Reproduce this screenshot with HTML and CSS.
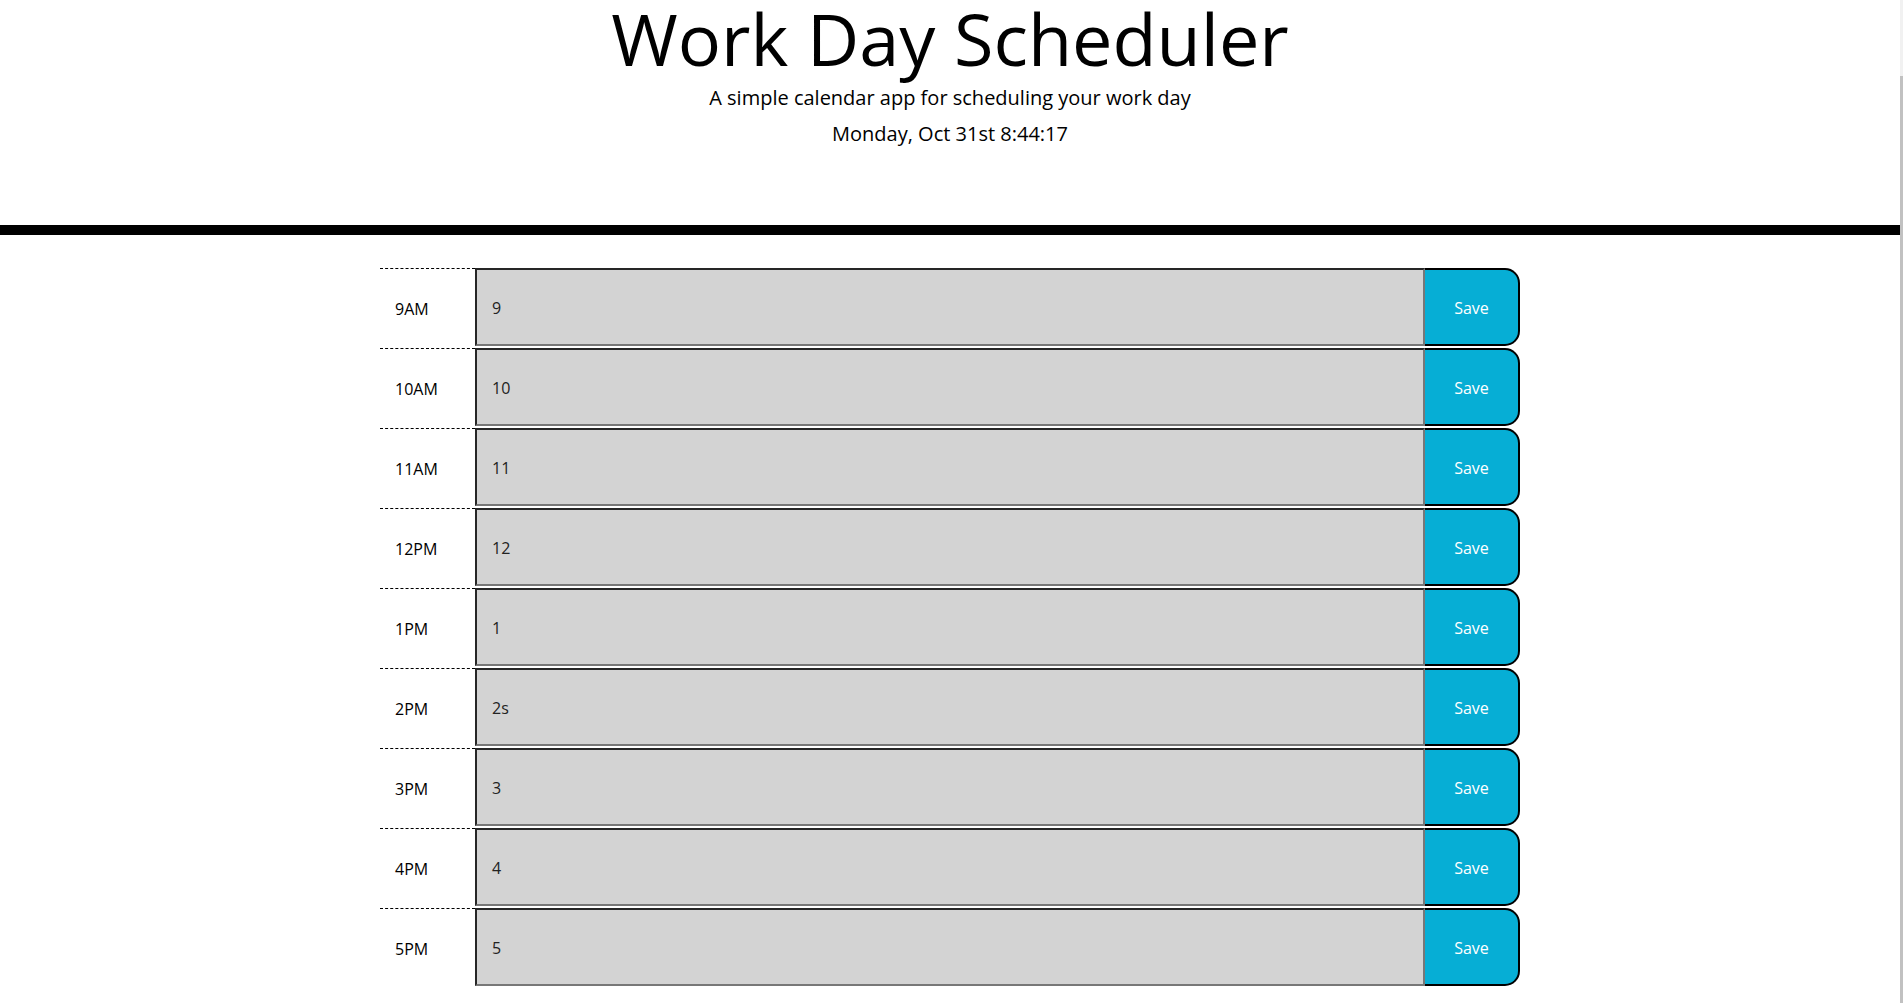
FILE: index.html
```html
<!DOCTYPE html>
<html lang="en">
<head>
    <meta charset="UTF-8">
    <meta name="viewport" content="width=device-width, initial-scale=1.0">
    <title>Work Day Scheduler</title>
    <link rel="stylesheet" href="styles.css">
</head>
<body>
    <header class="jumbotron">
        <h1 class="display-3">Work Day Scheduler</h1>
        <p class="lead">A simple calendar app for scheduling your work day</p>
        <p class="lead" id="currentDay">Monday, Oct 31st 8:44:17</p>
    </header>

    <div class="container">
        <div class="row time-block">
            <div class="hour">9AM</div>
            <textarea class="description past">9</textarea>
            <button class="saveBtn" type="button">Save</button>
        </div>
        <div class="row time-block">
            <div class="hour">10AM</div>
            <textarea class="description past">10</textarea>
            <button class="saveBtn" type="button">Save</button>
        </div>
        <div class="row time-block">
            <div class="hour">11AM</div>
            <textarea class="description past">11</textarea>
            <button class="saveBtn" type="button">Save</button>
        </div>
        <div class="row time-block">
            <div class="hour">12PM</div>
            <textarea class="description past">12</textarea>
            <button class="saveBtn" type="button">Save</button>
        </div>
        <div class="row time-block">
            <div class="hour">1PM</div>
            <textarea class="description past">1</textarea>
            <button class="saveBtn" type="button">Save</button>
        </div>
        <div class="row time-block">
            <div class="hour">2PM</div>
            <textarea class="description past">2s</textarea>
            <button class="saveBtn" type="button">Save</button>
        </div>
        <div class="row time-block">
            <div class="hour">3PM</div>
            <textarea class="description past">3</textarea>
            <button class="saveBtn" type="button">Save</button>
        </div>
        <div class="row time-block">
            <div class="hour">4PM</div>
            <textarea class="description past">4</textarea>
            <button class="saveBtn" type="button">Save</button>
        </div>
        <div class="row time-block">
            <div class="hour">5PM</div>
            <textarea class="description past">5</textarea>
            <button class="saveBtn" type="button">Save</button>
        </div>
    </div>
</body>
</html>
```

FILE: styles.css
```css
/* thin scrollbar strip on the right edge */
html {
    background: linear-gradient(to bottom, #f1f1f1 76px, #c1c1c1 76px);
}

body {
    font-family: "Open Sans", "Noto Sans", sans-serif;
    line-height: 1;
    color: #212529;
    background-color: #fff;
    margin: 0 3px 0 0;
    min-height: 100vh;
}

.jumbotron {
    text-align: center;
    color: black;
    padding: 2px 0 65px;
    margin-bottom: 32px;
    border-bottom: 10px solid black;
}

.display-3 {
    font-size: 72px;
    font-weight: 400;
    line-height: 1;
    margin: 0 0 14px;
}

.lead {
    font-size: 20px;
    font-weight: 400;
    margin: 0 0 16px;
}

.container {
    width: 1140px;
    margin: 0 auto;
}

.row {
    display: flex;
    align-items: flex-start;
    height: 80px;
    box-sizing: border-box;
    border-top: 1px solid white;
}

.hour {
    flex: 0 0 95px;
    box-sizing: border-box;
    height: 100%;
    padding: 2px 15px 0;
    display: flex;
    align-items: center;
    color: #000;
    font-size: 16px;
    border-top: 1px dashed #000;
}

.description {
    flex: 0 0 950px;
    box-sizing: border-box;
    height: 78px;
    margin: 0;
    padding: 30px 15px 0;
    font-family: inherit;
    font-size: 16px;
    line-height: 1;
    color: #222;
    resize: none;
    white-space: pre-wrap;
    border: 2px solid;
    border-color: #262626 #777 #777 #262626;
    border-radius: 0;
    outline: none;
}

.past {
    background-color: #d3d3d3;
}

.saveBtn {
    flex: 0 0 95px;
    box-sizing: border-box;
    height: 78px;
    margin: 0;
    padding: 2px 0 0;
    font-family: inherit;
    font-size: 16px;
    line-height: 1;
    color: white;
    background-color: #06aed5;
    border: 2px solid #000;
    border-left: none;
    border-radius: 0 15px 15px 0;
    cursor: pointer;
}
```
